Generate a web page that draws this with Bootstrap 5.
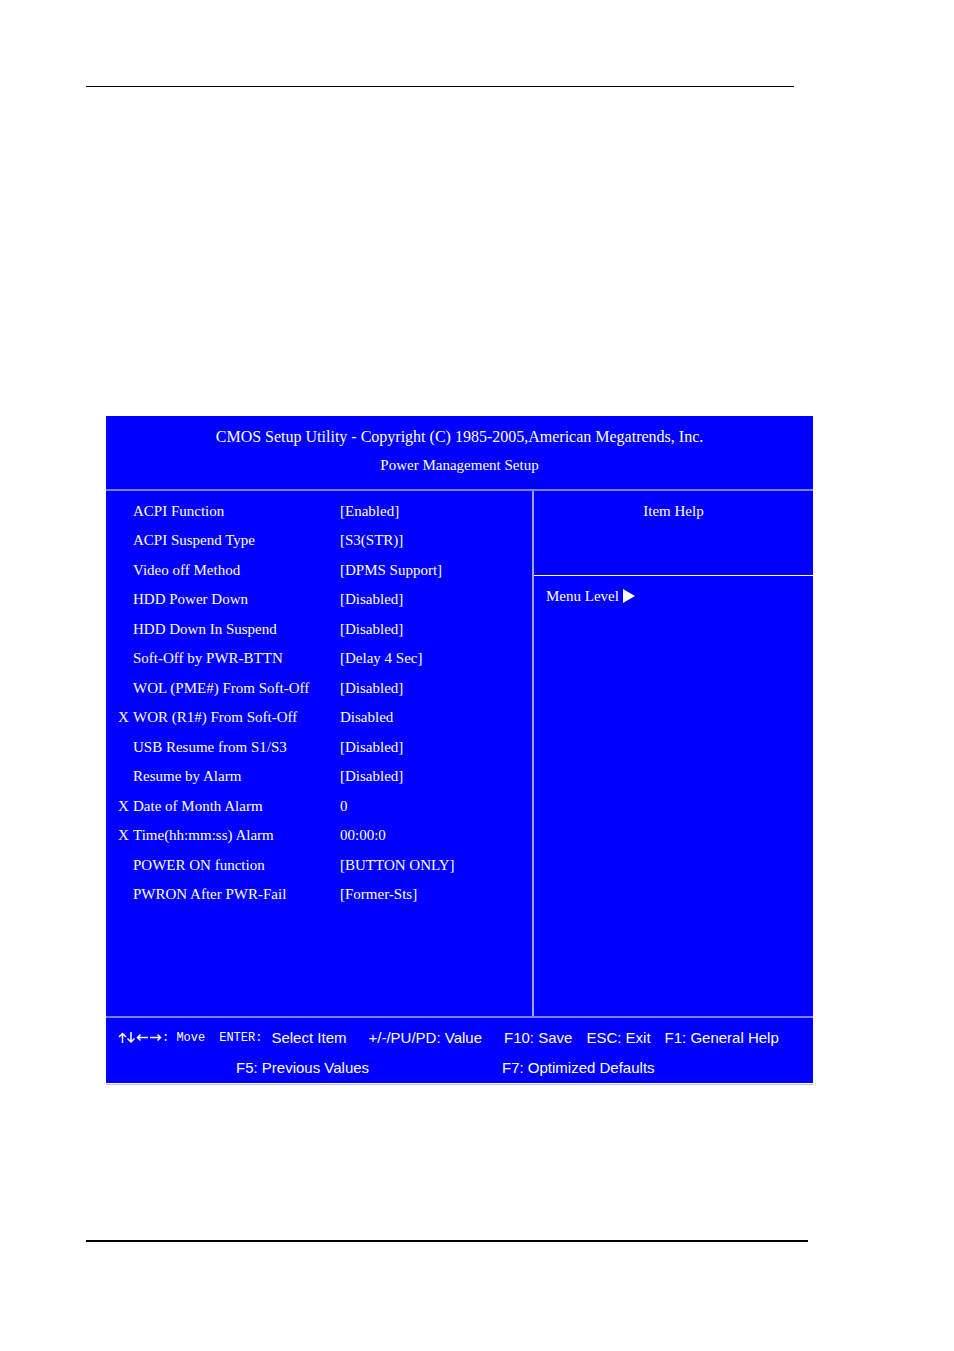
<!DOCTYPE html>
<html lang="en">

<head>
    <meta charset="UTF-8">
    <meta name="viewport" content="width=device-width, initial-scale=1.0">
    <title>Power Management Setup</title>
    <link href="https://cdn.jsdelivr.net/npm/bootstrap@5.3.0/dist/css/bootstrap.min.css" rel="stylesheet">
    <style>
        body {
            background-color: #fff;
            color: #000;
            font-family: "Liberation Serif", "Times New Roman", serif;
            font-size: 15px;
            line-height: 20px;
        }

        .manual-page {
            padding: 86px 141px 108px 86px;
        }

        .page-rule {
            border-top: 1px solid #000;
            margin-right: 19px;
        }

        .page-rule-bottom {
            border-top: 2px solid #000;
            margin-right: 5px;
        }

        .bios-frame {
            margin: 329px 0 155px 20px;
            padding-bottom: 1px;
            border-bottom: 1px solid #c0c0c0;
        }

        .bios-screen {
            background-color: #0000ff;
            color: #fff;
        }

        .bios-header {
            padding: 11px 0 14px;
        }

        .bios-header h1 {
            font-size: 16px;
            line-height: 20px;
            margin-bottom: 8px;
        }

        .bios-header h2 {
            font-size: 15px;
            line-height: 20px;
            margin: 0;
        }

        .bios-body {
            grid-template-columns: 426fr 281fr;
            border-top: 2px solid #8080ff;
            border-bottom: 2px solid #8080ff;
        }

        .bios-options {
            padding: 5px 0 107px 12px;
        }

        .bios-options table {
            height: 413px;
            width: 100%;
        }

        .bios-options th,
        .bios-options td {
            padding: 0;
            font-weight: 400;
            vertical-align: middle;
        }

        .col-flag {
            width: 15px;
        }

        .col-name {
            width: 50%;
        }

        .bios-help {
            border-left: 2px solid #a0a0ff;
        }

        .help-title {
            height: 85px;
            padding-top: 10px;
            border-bottom: 1px solid #fff;
        }

        .help-level {
            padding: 10px 12px;
        }

        .bios-keys {
            font-family: "Liberation Sans", Arial, sans-serif;
            padding: 10px 12px 5px;
        }

        .keys-mono {
            font-family: "Liberation Mono", "Courier New", monospace;
            font-size: 12px;
        }

        .keys-first {
            margin-bottom: 10px;
        }

        .keys-second {
            padding-left: 118px;
        }

        .keys-second span:first-child {
            width: 266px;
        }

        .gap-wide {
            margin-left: 22px;
        }

        .gap-narrow {
            margin-left: 14px;
        }

        .gap-tight {
            margin-left: 9px;
        }
    </style>
</head>

<body>
    <main class="manual-page">
        <div class="page-rule"></div>
        <div class="bios-frame">
            <div class="bios-screen">
                <header class="bios-header text-center">
                    <h1 class="fw-normal">CMOS Setup Utility - Copyright (C) 1985-2005,American Megatrends, Inc.</h1>
                    <h2 class="fw-normal">Power Management Setup</h2>
                </header>
                <div class="bios-body d-grid">
                    <section class="bios-options">
                        <table>
                            <colgroup>
                                <col class="col-flag">
                                <col class="col-name">
                                <col>
                            </colgroup>
                            <tbody>
                                <tr><td></td><th scope="row">ACPI Function</th><td>[Enabled]</td></tr>
                                <tr><td></td><th scope="row">ACPI Suspend Type</th><td>[S3(STR)]</td></tr>
                                <tr><td></td><th scope="row">Video off Method</th><td>[DPMS Support]</td></tr>
                                <tr><td></td><th scope="row">HDD Power Down</th><td>[Disabled]</td></tr>
                                <tr><td></td><th scope="row">HDD Down In Suspend</th><td>[Disabled]</td></tr>
                                <tr><td></td><th scope="row">Soft-Off by PWR-BTTN</th><td>[Delay 4 Sec]</td></tr>
                                <tr><td></td><th scope="row">WOL (PME#) From Soft-Off</th><td>[Disabled]</td></tr>
                                <tr><td>X</td><th scope="row">WOR (R1#) From Soft-Off</th><td>Disabled</td></tr>
                                <tr><td></td><th scope="row">USB Resume from S1/S3</th><td>[Disabled]</td></tr>
                                <tr><td></td><th scope="row">Resume by Alarm</th><td>[Disabled]</td></tr>
                                <tr><td>X</td><th scope="row">Date of Month Alarm</th><td>0</td></tr>
                                <tr><td>X</td><th scope="row">Time(hh:mm:ss) Alarm</th><td>00:00:0</td></tr>
                                <tr><td></td><th scope="row">POWER ON function</th><td>[BUTTON ONLY]</td></tr>
                                <tr><td></td><th scope="row">PWRON After PWR-Fail</th><td>[Former-Sts]</td></tr>
                            </tbody>
                        </table>
                    </section>
                    <aside class="bios-help">
                        <div class="help-title text-center">Item Help</div>
                        <div class="help-level d-flex align-items-center gap-1">
                            <span>Menu Level</span>
                            <svg width="12" height="14" viewBox="0 0 12 14" fill="#fff" aria-hidden="true">
                                <path d="M0 0L12 7L0 14Z" />
                            </svg>
                        </div>
                    </aside>
                </div>
                <footer class="bios-keys">
                    <div class="keys-first d-flex align-items-center text-nowrap">
                        <!-- Arrow keys: up, down, left, right -->
                        <svg width="44" height="12" viewBox="0 0 44 12" fill="none" stroke="#fff" stroke-width="1.5" role="img" aria-label="Arrow keys">
                            <path d="M4.5 11V1.5M1 5L4.5 1.5L8 5" />
                            <path d="M13 0V10M9.500 6.500L13 10L16.500 6.500" />
                            <path d="M19.500 5.500H30M22.500 2.500L19.500 5.500L22.500 8.500" />
                            <path d="M32 5.500H42.500M39.500 2.500L42.500 5.500L39.500 8.500" />
                        </svg>
                        <span class="keys-mono">: Move</span>
                        <span class="keys-mono gap-narrow">ENTER:</span>
                        <span class="gap-tight">Select Item</span>
                        <span class="gap-wide">+/-/PU/PD: Value</span>
                        <span class="gap-wide">F10: Save</span>
                        <span class="gap-narrow">ESC: Exit</span>
                        <span class="gap-narrow">F1: General Help</span>
                    </div>
                    <div class="keys-second d-flex text-nowrap">
                        <span>F5: Previous Values</span>
                        <span>F7: Optimized Defaults</span>
                    </div>
                </footer>
            </div>
        </div>
        <div class="page-rule-bottom"></div>
    </main>
    <script src="https://cdn.jsdelivr.net/npm/bootstrap@5.3.0/dist/js/bootstrap.bundle.min.js"></script>
</body>

</html>
